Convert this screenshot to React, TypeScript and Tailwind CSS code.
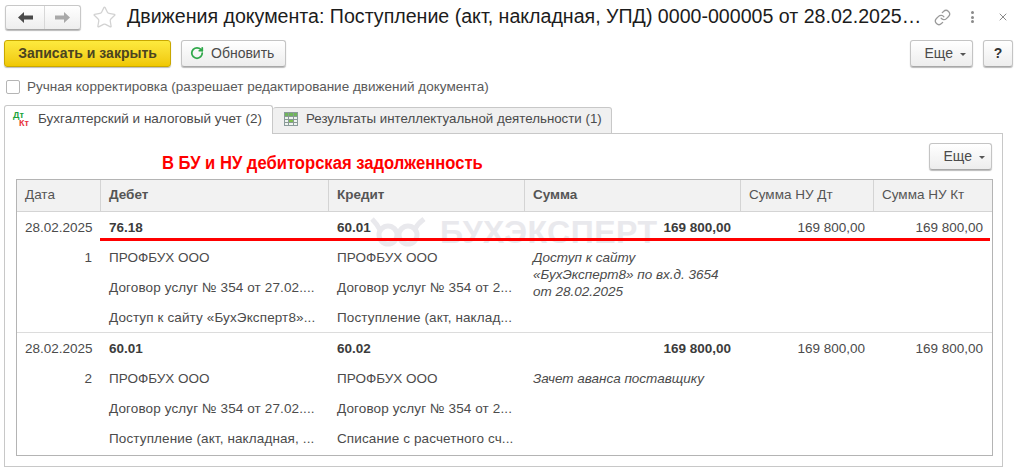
import { Star, Link, X, RotateCw } from "lucide-react";

const font = "[font-family:'Liberation_Sans',Arial,sans-serif]";

const Caret = () => (
    <span className="ml-[7px] mt-[2px] h-0 w-0 border-x-[3px] border-t-[3px] border-x-transparent border-t-[#555]"></span>
);

const GrayBtn = ({ className, children }: { className: string; children: React.ReactNode }) => (
    <div
        className={`flex shrink-0 items-center rounded-[3px] border border-[#c4c4c4] border-b-[#a8a8a8] bg-gradient-to-b from-white to-[#ededed] shadow-[0_1px_1px_#bbb] text-[14px] text-[#4b4b4b] ${className}`}
    >
        {children}
    </div>
);

const NavArrow = ({ color, flip }: { color: string; flip?: boolean }) => (
    <svg width="15" height="11" viewBox="0 0 15 11" className={flip ? "rotate-180" : ""}>
        <path d="M0 5.5L6 0V3.5H15V7.5H6V11Z" fill={color} />
    </svg>
);

const AccountIcon = () => (
    <div className="relative h-[20px] w-[20px] shrink-0 text-[9px] font-bold leading-none">
        <span className="absolute left-0 top-[1px] text-[#1aa33a]">Дт</span>
        <span className="absolute left-[6px] top-[9px] text-[#e8323a]">Кт</span>
    </div>
);

const TableIcon = () => (
    <svg width="14" height="14" viewBox="0 0 14 14" className="shrink-0">
        <rect x="0.5" y="0.5" width="13" height="13" fill="#eef3f0" stroke="#8a9a9a" />
        <rect x="1" y="1" width="12" height="3" fill="#6fb55a" />
        <rect x="5" y="7" width="4" height="3" fill="#7cc04f" />
        <path d="M1 4.5H13M1 7.5H13M1 10.5H13M4.5 1V13M9.5 1V13" stroke="#8a9a96" strokeWidth="1" fill="none" />
    </svg>
);

const colWidths = ["w-[83px]", "w-[228px]", "w-[196px]", "w-[216px]", "w-[133px]", "w-[120px]"];

const headers = ["Дата", "Дебет", "Кредит", "Сумма", "Сумма НУ Дт", "Сумма НУ Кт"];

type Entry = {
    date: string;
    num: string;
    debit: string[];
    credit: string[];
    note: string;
};

const entries: Entry[] = [
    {
        date: "28.02.2025",
        num: "1",
        debit: ["76.18", "ПРОФБУХ ООО", "Договор услуг № 354 от 27.02....", "Доступ к сайту «БухЭксперт8»..."],
        credit: ["60.01", "ПРОФБУХ ООО", "Договор услуг № 354 от 2...", "Поступление (акт, наклад..."],
        note: "Доступ к сайту «БухЭксперт8» по вх.д. 3654 от 28.02.2025",
    },
    {
        date: "28.02.2025",
        num: "2",
        debit: ["60.01", "ПРОФБУХ ООО", "Договор услуг № 354 от 27.02....", "Поступление (акт, накладная, ..."],
        credit: ["60.02", "ПРОФБУХ ООО", "Договор услуг № 354 от 2...", "Списание с расчетного сч..."],
        note: "Зачет аванса поставщику",
    },
];

const Cells = ({ lines, width }: { lines: string[]; width: string }) => (
    <div className={`${width} shrink-0 pl-[9px]`}>
        {lines.map((line, i) => (
            <div
                key={i}
                className={`flex h-[30px] items-center whitespace-nowrap ${i === 0 ? "font-bold text-[#3c3c3c]" : ""} ${i > 1 ? "tracking-[0.12px]" : ""}`}
            >
                {line}
            </div>
        ))}
    </div>
);

const Row = ({ entry, last }: { entry: Entry; last: boolean }) => (
    <div className={`relative flex h-[121px] pt-px ${last ? "" : "border-b border-[#dcdcdc]"}`}>
        <div className={`${colWidths[0]} shrink-0 px-[8px] text-right`}>
            <div className="flex h-[30px] items-center">{entry.date}</div>
            <div className="flex h-[30px] items-center justify-end">{entry.num}</div>
        </div>
        <Cells lines={entry.debit} width={colWidths[1]} />
        <Cells lines={entry.credit} width={colWidths[2]} />
        <div className={`${colWidths[3]} shrink-0 px-[9px]`}>
            <div className="flex h-[30px] items-center justify-end font-bold text-[#3c3c3c]">169 800,00</div>
            <div className="mt-[6px] w-[195px] text-[13.5px] italic leading-[17px]">{entry.note}</div>
        </div>
        <div className={`${colWidths[4]} shrink-0 pl-[9px] pr-[8px]`}>
            <div className="flex h-[30px] items-center justify-end">169 800,00</div>
        </div>
        <div className={`${colWidths[5]} shrink-0 pl-[9px] pr-[10px]`}>
            <div className="flex h-[30px] items-center justify-end">169 800,00</div>
        </div>
    </div>
);

export default function App() {
    return (
        <div className={`${font} h-[470px] w-[1015px] overflow-hidden bg-white px-[4px] pt-[4px] text-[13.5px] text-[#4b4b4b]`}>
            {/* title row */}
            <div className="flex h-[26px] items-center">
                <div className="ml-px flex h-[25px] w-[76px] shrink-0 rounded-[3px] border border-[#c8c8c8] border-b-[#a8a8a8] bg-gradient-to-b from-white to-[#eeeeee] shadow-[0_1px_1px_#bbb]">
                    <div className="flex w-[39px] items-center justify-center border-r border-[#d8d8d8]">
                        <NavArrow color="#4a4a4a" />
                    </div>
                    <div className="flex flex-1 items-center justify-center">
                        <NavArrow color="#a9a9a9" flip />
                    </div>
                </div>
                <Star className="ml-[11px] h-[25px] w-[25px] shrink-0 text-[#d2d2d2]" strokeWidth={1.2} />
                <div className="ml-[10px] shrink-0 whitespace-nowrap text-[19.6px] leading-none text-[#1c1c1c]">
                    Движения документа: Поступление (акт, накладная, УПД) 0000-000005 от 28.02.2025…
                </div>
                <Link className="ml-[13px] h-[17px] w-[17px] shrink-0 text-[#9a9a9a]" strokeWidth={1.8} />
                <div className="ml-[20px] flex h-[12px] w-[4px] shrink-0 flex-col justify-between">
                    <span className="h-[3px] w-[3px] rounded-full bg-[#8a8a8a]"></span>
                    <span className="h-[3px] w-[3px] rounded-full bg-[#8a8a8a]"></span>
                    <span className="h-[3px] w-[3px] rounded-full bg-[#8a8a8a]"></span>
                </div>
                <X className="ml-[22px] h-[12px] w-[12px] shrink-0 text-[#8a8a8a]" strokeWidth={2} />
            </div>

            {/* toolbar */}
            <div className="mt-[10px] flex h-[27px] items-center">
                <div className="flex h-[27px] w-[167px] items-center justify-center rounded-[3px] border border-[#c9a800] bg-gradient-to-b from-[#fdea3d] to-[#f0c800] text-[14px] font-bold text-[#4b4420] shadow-[0_1px_1px_#bbb]">
                    Записать и закрыть
                </div>
                <GrayBtn className="ml-[10px] h-[27px] w-[105px] pb-px pl-[8px]">
                    <RotateCw className="h-[14px] w-[14px] text-[#2fa84a]" strokeWidth={3} />
                    <span className="ml-[7px]">Обновить</span>
                </GrayBtn>
                <GrayBtn className="ml-auto h-[27px] w-[63px] justify-end pr-[6px]">
                    Еще
                    <Caret />
                </GrayBtn>
                <GrayBtn className="ml-[10px] -mr-[2px] h-[27px] w-[30px] justify-center font-bold text-[#333]">?</GrayBtn>
            </div>

            {/* checkbox */}
            <div className="mt-[11px] flex h-[18px] items-center pl-[2px]">
                <div className="h-[14px] w-[14px] rounded-[2px] border border-[#b5b5b5] bg-white"></div>
                <span className="ml-[7px] text-[#5a5a5a]">Ручная корректировка (разрешает редактирование движений документа)</span>
            </div>

            {/* tabs */}
            <div className="relative z-10 mt-[9px] flex h-[29px] items-end">
                <div className="flex h-[29px] w-[269px] items-center rounded-t-[3px] border border-b-0 border-[#c8c8c8] bg-white pb-px pl-[8px]">
                    <AccountIcon />
                    <span className="ml-[5px] whitespace-nowrap">Бухгалтерский и налоговый учет (2)</span>
                </div>
                <div className="flex h-[27px] w-[339px] items-center rounded-t-[3px] border border-l-0 border-[#c8c8c8] bg-[#f0f0f0] pb-[3px] pl-[11px]">
                    <TableIcon />
                    <span className="ml-[8px] whitespace-nowrap text-[13.3px]">Результаты интеллектуальной деятельности (1)</span>
                </div>
            </div>

            {/* panel */}
            <div className="-mt-px h-[334px] w-[999px] border border-[#c8c8c8] px-[11px] pt-[8px]">
                <div className="relative -mr-px flex h-[29px] items-center justify-end">
                    <div className="absolute left-[146px] top-[10px] origin-left whitespace-nowrap text-[18px] font-bold leading-[22px] text-[#ff0000] [transform:scaleX(0.923)]">
                        В БУ и НУ дебиторская задолженность
                    </div>
                    <GrayBtn className="h-[27px] w-[63px] justify-end pr-[6px]">
                        Еще
                        <Caret />
                    </GrayBtn>
                </div>

                {/* table */}
                <div className="relative mt-[8px] h-[277px] w-[977px] border border-[#b4b4b4]">
                    {/* watermark sits under the text */}
                    <div className="pointer-events-none absolute left-[350px] top-[36px] flex items-center">
                        <svg width="62" height="32" viewBox="0 0 62 32" fill="none" stroke="#e9e9ed" strokeWidth="5">
                            <circle cx="21" cy="19" r="9" />
                            <circle cx="41" cy="19" r="9" />
                            <path d="M13 14C11 10 8 6 5 3" />
                            <path d="M48 13C50 9 53 6 57 3" />
                        </svg>
                        <span className="ml-[11px] whitespace-nowrap text-[32px] font-bold leading-none tracking-[0.5px] text-[#e9e9ed]">БУХЭКСПЕРТ</span>
                    </div>

                    <div className="relative flex h-[32px] border-b border-[#d4d4d4] bg-[#f2f2f2]">
                        {headers.map((h, i) => (
                            <div
                                key={h}
                                className={`${colWidths[i]} flex shrink-0 items-center pl-[8px] ${i > 0 ? "border-l border-[#d4d4d4]" : ""} ${i === 1 || i === 2 || i === 3 ? "font-bold text-[#555]" : "text-[#555]"}`}
                            >
                                {h}
                            </div>
                        ))}
                    </div>
                    {entries.map((entry, i) => (
                        <Row key={i} entry={entry} last={i === entries.length - 1} />
                    ))}

                    <div className="pointer-events-none absolute left-[83px] top-[58px] h-[3px] w-[890px] bg-[#ff0000]"></div>
                </div>
            </div>
        </div>
    );
}
